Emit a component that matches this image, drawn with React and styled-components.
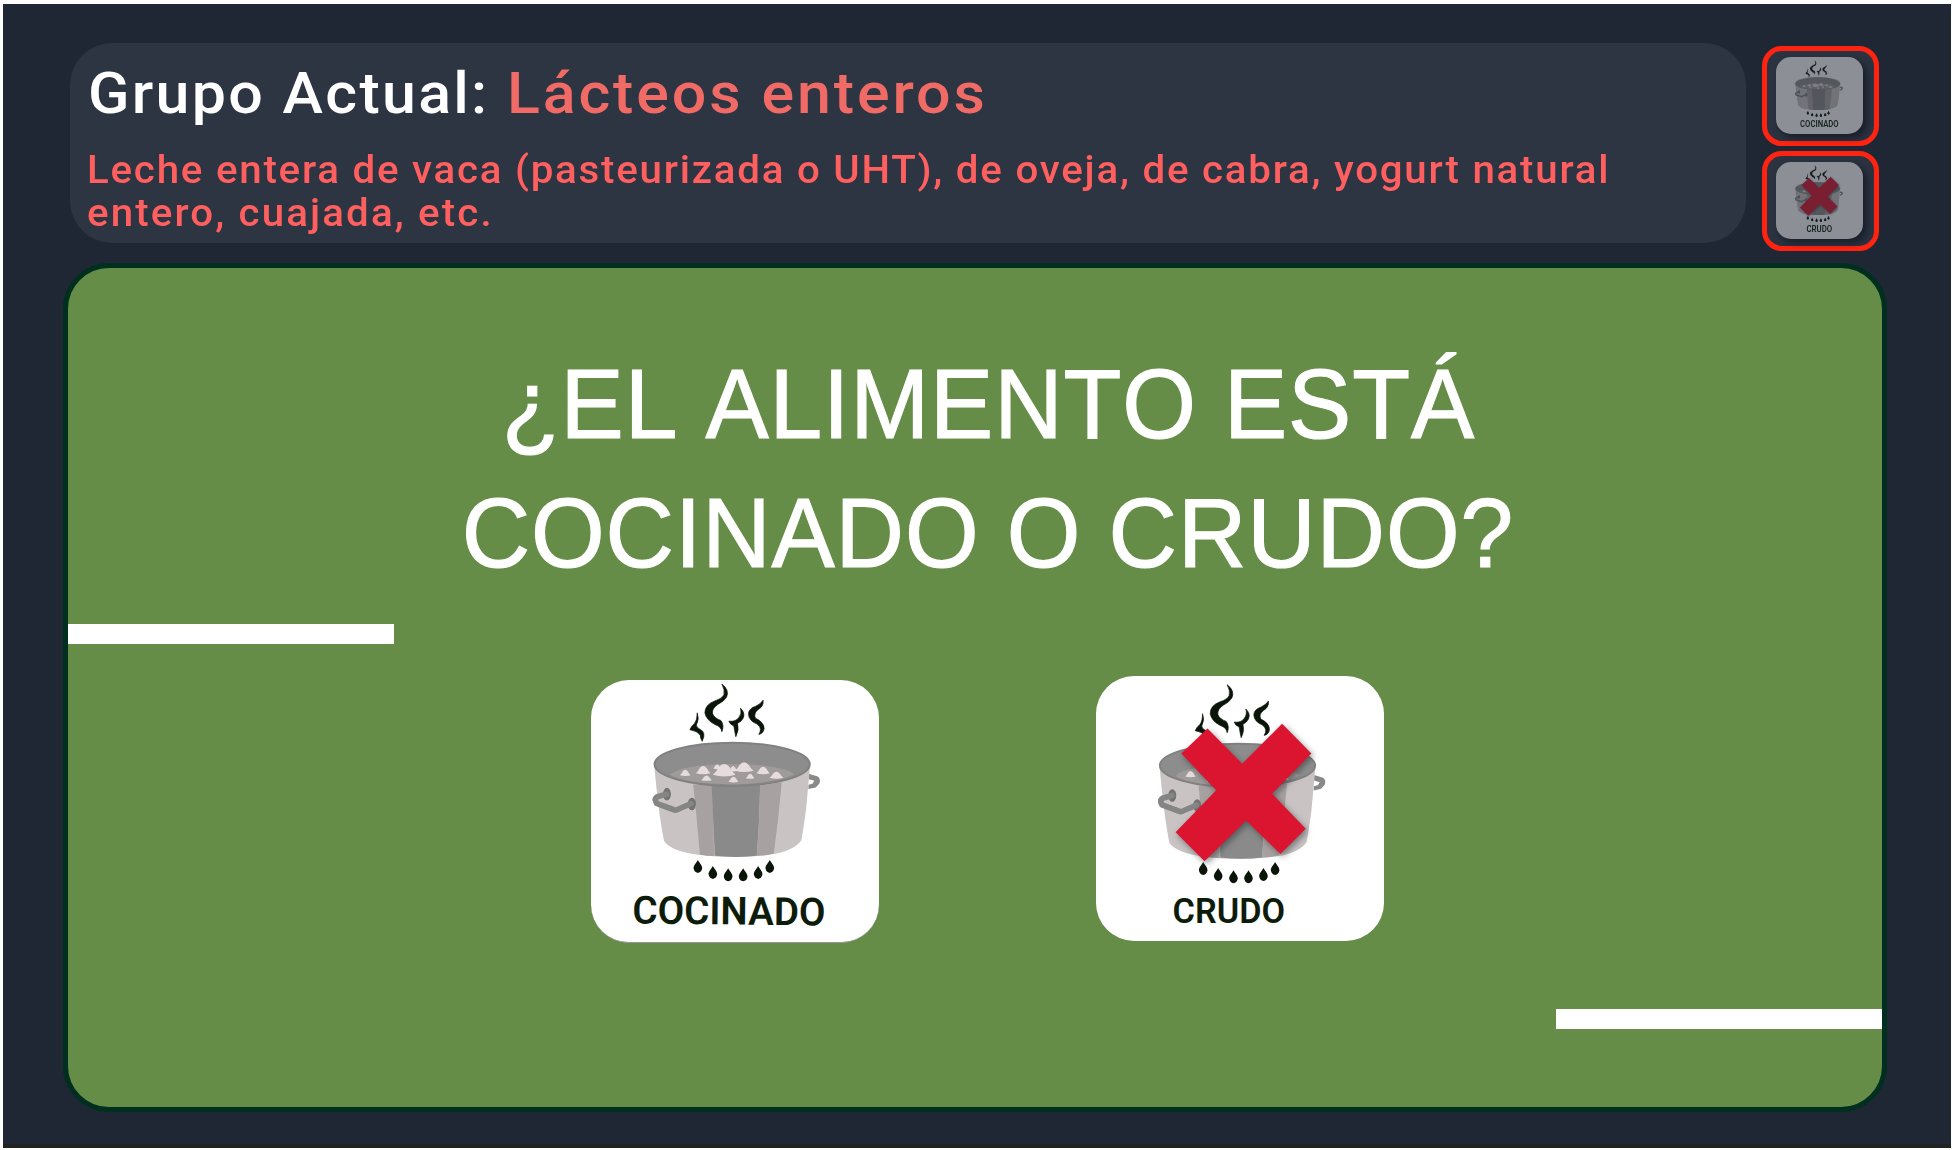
import React from 'react';
import styled, { createGlobalStyle } from 'styled-components';

const GlobalStyle = createGlobalStyle`
  * { box-sizing: border-box; }
  html, body { margin: 0; padding: 0; background: #fdfdfd; }
`;

const Page = styled.div`
  width: 1952px;
  height: 1150px;
  padding: 4px 1px 2px 3px;
  overflow: hidden;
  background: #fdfdfd;
`;

const Screen = styled.main`
  display: flex;
  flex-direction: column;
  height: 1144px;
  padding: 39px 64px 0 60px;
  background: #202734;
  border-bottom: 4px solid #222222;
`;

const Header = styled.header`
  display: flex;
  align-items: flex-start;
  gap: 16px;
  height: 220px;
  padding-left: 7px;
`;

const GroupPanel = styled.section`
  width: 1676px;
  height: 200px;
  padding: 17px 0 0 17px;
  border-radius: 42px;
  background: #2d3442;
  font-family: Roboto, 'Liberation Sans', sans-serif;
  font-weight: 500;
  white-space: nowrap;
`;

const GroupTitle = styled.h1`
  margin: 0 0 0 1px;
  font-size: 57.5px;
  font-weight: 500;
  line-height: 68px;
  color: #ffffff;
  letter-spacing: 2.15px;
  transform: scaleX(1.06);
  transform-origin: left;
`;

const GroupName = styled.span`
  color: #f06a66;
  letter-spacing: 2.7px;
`;

const Description = styled.p`
  margin: 21px 0 0;
  font-size: 38px;
  line-height: 43px;
  color: #ff5f5f;
  transform: scaleX(1.06);
  transform-origin: left;
`;

const DescriptionLine = styled.span`
  display: block;
  letter-spacing: ${(p) => p.$spacing}px;
`;

const Answers = styled.aside`
  display: flex;
  flex-direction: column;
  gap: 5px;
  padding-top: 3px;
`;

const AnswerFrame = styled.div`
  display: flex;
  align-items: center;
  justify-content: center;
  width: 117px;
  height: 100px;
  padding: 0 2px 1px 0;
  border: 5px solid #ff2411;
  border-radius: 20px;
  background: #2b3240;
`;

const AnswerThumb = styled.div`
  width: 87px;
  height: 77px;
  overflow: hidden;
  border-radius: 15px;
  background: #202734;
  box-shadow: 4px 4px 7px rgba(10, 14, 24, 0.55);
`;

const Dimmed = styled.div`
  height: 100%;
  background: #ffffff;
  opacity: 0.485;
`;

const Board = styled.section`
  display: flex;
  flex-direction: column;
  width: 1824px;
  height: 849px;
  border: 5px solid #002f20;
  border-radius: 46px;
  background: #668d47;
  overflow: hidden;
`;

const Question = styled.h2`
  display: flex;
  flex-direction: column;
  align-items: center;
  margin: 71px 0 0;
  font-family: 'Liberation Sans', Arial, sans-serif;
  font-size: 99px;
  font-weight: 400;
  font-kerning: none;
  line-height: 129px;
  color: #ffffff;
  white-space: nowrap;
  -webkit-text-stroke: 1.2px #ffffff;
`;

const QuestionLine = styled.span`
  display: block;
  margin-left: ${(p) => p.$shift}px;
  letter-spacing: ${(p) => p.$spacing}px;
  transform: scaleX(0.957);
`;

const Stripe = styled.div`
  flex: none;
  align-self: ${(p) => p.$side};
  width: 326px;
  height: 20px;
  margin-top: ${(p) => p.$top}px;
  background: #ffffff;
`;

const Options = styled.div`
  display: flex;
  align-items: flex-start;
  gap: 217px;
  height: 267px;
  margin-top: 32px;
  padding-left: 523px;
`;

const Option = styled.button`
  display: block;
  width: 288px;
  height: ${(p) => p.$height}px;
  margin: ${(p) => p.$top}px 0 0;
  padding: 0;
  overflow: hidden;
  border: 0;
  border-bottom: ${(p) => (p.$edge ? '1px solid #969696' : '0')};
  border-radius: 38px;
  background: #ffffff;
`;

const Drawing = styled.svg`
  display: block;
  width: 100%;
  height: 100%;
`;

const Caption = styled.text`
  font-family: Roboto, 'Liberation Sans', sans-serif;
  font-weight: 600;
  fill: #0d1c0a;
`;

const Bubble = ({ x, y, w, h }) => (
  <path
    d={`M${x - w / 2} ${y} Q${x - w / 3} ${y - h * 0.3} ${x - w / 4} ${y - h * 0.7} Q${x} ${y - h * 1.35} ${x + w / 4} ${y - h * 0.7} Q${x + w / 3} ${y - h * 0.3} ${x + w / 2} ${y} Q${x} ${y + h * 0.3} ${x - w / 2} ${y}Z`}
    fill="#e6dcdd"
  />
);

const bubbles = [
  [412, 297, 24, 12], [460, 304, 24, 14], [316, 317, 32, 16], [370, 311, 44, 21],
  [493, 304, 56, 25], [550, 311, 40, 19], [433, 316, 68, 32], [590, 325, 42, 18],
  [380, 332, 32, 14], [461, 337, 30, 15], [511, 326, 26, 13],
];

const drops = [[354, 573], [399, 591], [445, 598], [490, 598], [535, 591], [570, 573]];

function Pot() {
  return (
    <g>
      <g fill="#0a1408" stroke="#0a1408" strokeWidth="2" strokeLinejoin="round">
        <path d="M426 42 Q450 60 440 82 Q431 96 415 103 Q396 115 398 131 Q403 145 423 152 Q434 166 426 186 Q424 170 405 164 Q379 151 375 129 Q375 104 405 93 Q425 87 432 75 Q436 61 426 42Z" />
        <path d="M352 129 Q359 148 350 164 Q347 172 361 179 Q380 188 367 215 Q361 207 361 196 Q351 183 330 180 Q333 171 344 161 Q352 151 352 129Z" />
        <path d="M482 115 Q497 129 490 145 Q485 155 473 161 Q479 178 468 201 Q464 182 462 169 Q450 164 447 154 Q467 157 477 143 Q487 132 482 115Z" />
        <path d="M550 91 Q552 110 535 119 Q520 131 527 145 Q553 157 553 177 Q550 192 537 194 Q549 176 532 163 Q507 153 506 133 Q506 116 528 109 Q543 102 550 91Z" />
      </g>
      <path d="M687 313 L714 321 Q724 328 719 342 L708 354 L686 359 L686 346 L698 343 L704 334 L687 329Z" fill="#898989" />
      <path d="M223 288 Q230 365 235 402 Q240 450 252 515 Q270 546 360 558 Q465 570 570 557 Q642 546 665 513 Q675 452 679 420 L691 288Z" fill="#c9c3c4" />
      <path d="M340 345 Q350 440 360 556 Q380 561 403 561 L397 345Z" fill="#a8a1a1" />
      <path d="M395 346 L405 560 Q467 567 531 560 Q540 450 541 345Z" fill="#8a8a8a" />
      <path d="M541 348 Q539 460 531 560 Q560 559 582 553 Q596 450 606 338Z" fill="#a8a1a1" />
      <ellipse cx="457" cy="284" rx="233" ry="65" fill="#8d8d8d" stroke="#828080" strokeWidth="6" />
      <path d="M270 316 Q300 285 456 283 Q610 285 643 314 Q590 342 456 345 Q318 343 270 316Z" fill="#a09b9b" />
      {bubbles.map(([x, y, w, h]) => <Bubble key={`${x}-${y}`} x={x} y={y} w={w} h={h} />)}
      <ellipse cx="261" cy="374" rx="12" ry="19" fill="#737373" />
      <ellipse cx="336" cy="404" rx="12" ry="19" fill="#737373" />
      <path d="M260 374 L232 382 Q222 388 230 402 L284 422 Q290 423 296 419 L334 403" fill="none" stroke="#858585" strokeWidth="17" strokeLinejoin="round" strokeLinecap="round" />
      {drops.map(([x, y]) => (
        <path key={x} d={`M${x} ${y} C${x + 4} ${y + 9} ${x + 13} ${y + 15} ${x + 13} ${y + 25} Q${x + 11} ${y + 37} ${x} ${y + 39} Q${x - 11} ${y + 37} ${x - 13} ${y + 25} C${x - 13} ${y + 15} ${x - 4} ${y + 9} ${x} ${y}Z`} fill="#0a1408" />
      ))}
    </g>
  );
}

const CrossShape = styled.path`
  fill: #db1530;
  filter: drop-shadow(6px 8px 9px rgba(30, 40, 40, 0.5));
`;

const Cross = () => (
  <CrossShape d="M367 173 L471 279 L591 159 L679 248 L561 369 L662 474 L586 549 L483 449 L358 571 L271 484 L393 358 L288 248Z" />
);

/* Full-size pictogram shown on the board. */
function Pictogram({ crossed, label }) {
  return (
    <Drawing viewBox={crossed ? '33 33 865 794' : '33 30 865 790'} preserveAspectRatio="none">
      <g transform={crossed ? 'translate(1 17)' : undefined}>
        <Pot />
        {crossed && <Cross />}
      </g>
      {crossed ? (
        <Caption x="263" y="774" fontSize="106" textLength="338" lengthAdjust="spacingAndGlyphs">{label}</Caption>
      ) : (
        <Caption x="157" y="764" fontSize="117" textLength="580" lengthAdjust="spacingAndGlyphs" transform="rotate(.6 157 764)">{label}</Caption>
      )}
    </Drawing>
  );
}

/* Small pictogram for the already answered questions. */
function Thumbnail({ crossed, label }) {
  return (
    <Drawing viewBox="108 81 260 231" preserveAspectRatio="none">
      <g transform="translate(102 79.8) scale(.286 .2845)">
        <Pot />
        {crossed && <Cross />}
      </g>
      <Caption x={crossed ? 199 : 180} y="290" fontSize="26" textLength={crossed ? 77 : 115} lengthAdjust="spacingAndGlyphs">{label}</Caption>
    </Drawing>
  );
}

export default function App() {
  return (
    <Page>
      <GlobalStyle />
      <Screen>
        <Header>
          <GroupPanel>
            <GroupTitle>
              Grupo Actual: <GroupName>Lácteos enteros</GroupName>
            </GroupTitle>
            <Description>
              <DescriptionLine $spacing={1.66}>
                Leche entera de vaca (pasteurizada o UHT), de oveja, de cabra, yogurt natural
              </DescriptionLine>
              <DescriptionLine $spacing={2}>entero, cuajada, etc.</DescriptionLine>
            </Description>
          </GroupPanel>
          <Answers>
            <AnswerFrame>
              <AnswerThumb><Dimmed><Thumbnail label="COCINADO" /></Dimmed></AnswerThumb>
            </AnswerFrame>
            <AnswerFrame>
              <AnswerThumb><Dimmed><Thumbnail crossed label="CRUDO" /></Dimmed></AnswerThumb>
            </AnswerFrame>
          </Answers>
        </Header>
        <Board>
          <Question>
            <QuestionLine $shift={27} $spacing={0.92}>¿EL ALIMENTO ESTÁ</QuestionLine>
            <QuestionLine $shift={26} $spacing={0.95}>COCINADO O CRUDO?</QuestionLine>
          </Question>
          <Stripe $side="flex-start" $top={27} />
          <Options>
            <Option $height={263} $top={4} $edge><Pictogram label="COCINADO" /></Option>
            <Option $height={265} $top={0}><Pictogram crossed label="CRUDO" /></Option>
          </Options>
          <Stripe $side="flex-end" $top={66} />
        </Board>
      </Screen>
    </Page>
  );
}
